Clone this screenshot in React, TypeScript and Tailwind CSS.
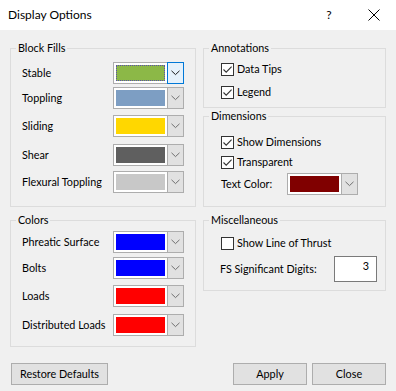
import React from "react";

const Chevron = ({ dark }: { dark?: boolean }) => (
  <svg width="9" height="6" viewBox="0 0 9 6" className="block">
    <path d="M0.5 0.8 L4.5 4.6 L8.5 0.8" fill="none" stroke={dark ? "#1a1a1a" : "#707070"} strokeWidth="1" />
  </svg>
);

const ColorCombo = ({ swatch, focused }: { swatch: string; focused?: boolean }) => (
  <div className="flex h-[22px] w-[71px] shrink-0 border border-[#adadad] bg-white">
    <div className="flex-1 p-[2px]">
      <div
        className={
          focused
            ? "h-full w-full outline-1 outline-dotted outline-[#5b4bb0] -outline-offset-1 " + swatch
            : "h-full w-full " + swatch
        }
      />
    </div>
    {focused ? (
      <div className="-my-px -mr-px flex w-[17px] items-center justify-center border border-[#0078d7] bg-[#e5f1fb]">
        <Chevron dark />
      </div>
    ) : (
      <div className="flex w-[16px] items-center justify-center border-l border-[#adadad] bg-[#e1e1e1]">
        <Chevron />
      </div>
    )}
  </div>
);

const Check = ({ checked }: { checked?: boolean }) => (
  <div className="flex h-[13px] w-[13px] items-center justify-center border border-[#333333] bg-white">
    {checked && (
      <svg width="11" height="11" viewBox="0 0 11 11" className="block">
        <path d="M1.5 5.5 L4.2 8.2 L9.6 2.6" fill="none" stroke="#333333" strokeWidth="1.1" />
      </svg>
    )}
  </div>
);

const CheckRow = ({ label, checked, className }: { label: string; checked?: boolean; className: string }) => (
  <div className={"flex h-[16px] items-center gap-[3px] " + className}>
    <Check checked={checked} />
    <span>{label}</span>
  </div>
);

const FillRow = ({ label, swatch, focused, className }: { label: string; swatch: string; focused?: boolean; className: string }) => (
  <div className={"flex items-center justify-between " + className}>
    <span>{label}</span>
    <ColorCombo swatch={swatch} focused={focused} />
  </div>
);

const Group = ({
  title,
  className,
  inner,
  children,
}: {
  title: string;
  className: string;
  inner: string;
  children: React.ReactNode;
}) => (
  <div className={"flex flex-col border border-[#dcdcdc] " + className}>
    <span className="-mt-[9px] ml-[5px] self-start bg-[#f0f0f0] px-[2px] leading-[16px]">{title}</span>
    <div className={"flex flex-col " + inner}>{children}</div>
  </div>
);

const Btn = ({ label, className }: { label: string; className: string }) => (
  <button className={"h-[22px] border border-[#adadad] bg-[#e1e1e1] leading-none text-black " + className}>{label}</button>
);

export default function App() {
  return (
    <div className="h-[391px] w-[396px] overflow-hidden whitespace-nowrap bg-[#f0f0f0] font-['Lato','Liberation_Sans',sans-serif] text-[10.8px] leading-[16px] text-black">
      <div className="flex h-[30px] items-center bg-white pl-[8px] text-[12px]">
        <span className="flex-1">Display Options</span>
        <span className="mr-[35px] w-[8px] text-center">?</span>
        <svg width="12" height="12" viewBox="0 0 12 12" className="mr-[16px] block">
          <path d="M0.5 0.5 L11.5 11.5 M11.5 0.5 L0.5 11.5" stroke="#000" strokeWidth="1" />
        </svg>
      </div>

      <div className="flex gap-[7px] pl-[10px] pt-[18px]">
        <div className="flex w-[186px] flex-col gap-[13px]">
          <Group title="Block Fills" className="h-[159px]" inner="px-[11px]">
            <FillRow label="Stable" swatch="bg-[#8cb847]" focused className="mt-[6px]" />
            <FillRow label="Toppling" swatch="bg-[#7d9ec3]" className="mt-[3px]" />
            <FillRow label="Sliding" swatch="bg-[#ffd700]" className="mt-[6px]" />
            <FillRow label="Shear" swatch="bg-[#5f5f5f]" className="mt-[7px]" />
            <FillRow label="Flexural Toppling" swatch="bg-[#c8c8c8]" className="mt-[5px]" />
          </Group>
          <Group title="Colors" className="h-[127px]" inner="px-[11px]">
            <FillRow label="Phreatic Surface" swatch="bg-[#0000ff]" className="mt-[3px]" />
            <FillRow label="Bolts" swatch="bg-[#0000ff]" className="mt-[4px]" />
            <FillRow label="Loads" swatch="bg-[#ff0000]" className="mt-[6px]" />
            <FillRow label="Distributed Loads" swatch="bg-[#ff0000]" className="mt-[7px]" />
          </Group>
        </div>

        <div className="flex w-[183px] flex-col">
          <Group title="Annotations" className="h-[60px]" inner="pl-[17px]">
            <CheckRow label="Data Tips" checked className="mt-[5px]" />
            <CheckRow label="Legend" checked className="mt-[7px]" />
          </Group>
          <Group title="Dimensions" className="mt-[8px] h-[91px]" inner="pl-[17px]">
            <CheckRow label="Show Dimensions" checked className="mt-[10px]" />
            <CheckRow label="Transparent" checked className="mt-[4px]" />
            <div className="mt-[3px] flex items-center">
              <span className="w-[66px]">Text Color:</span>
              <ColorCombo swatch="bg-[#800000]" />
            </div>
          </Group>
          <Group title="Miscellaneous" className="mt-[13px] h-[71px]" inner="pl-[16px] pr-[8px]">
            <CheckRow label="Show Line of Thrust" className="ml-px mt-[7px]" />
            <div className="mt-[5px] flex items-center justify-between">
              <span>FS Significant Digits:</span>
              <div className="h-[26px] w-[43px] border border-[#7a7a7a] bg-white pr-[7px] pt-[1px] text-right">3</div>
            </div>
          </Group>
        </div>
      </div>

      <div className="mt-[16px] flex pl-[11px]">
        <Btn label="Restore Defaults" className="w-[97px]" />
        <Btn label="Apply" className="ml-[125px] w-[74px]" />
        <Btn label="Close" className="ml-[5px] w-[74px]" />
      </div>
    </div>
  );
}
